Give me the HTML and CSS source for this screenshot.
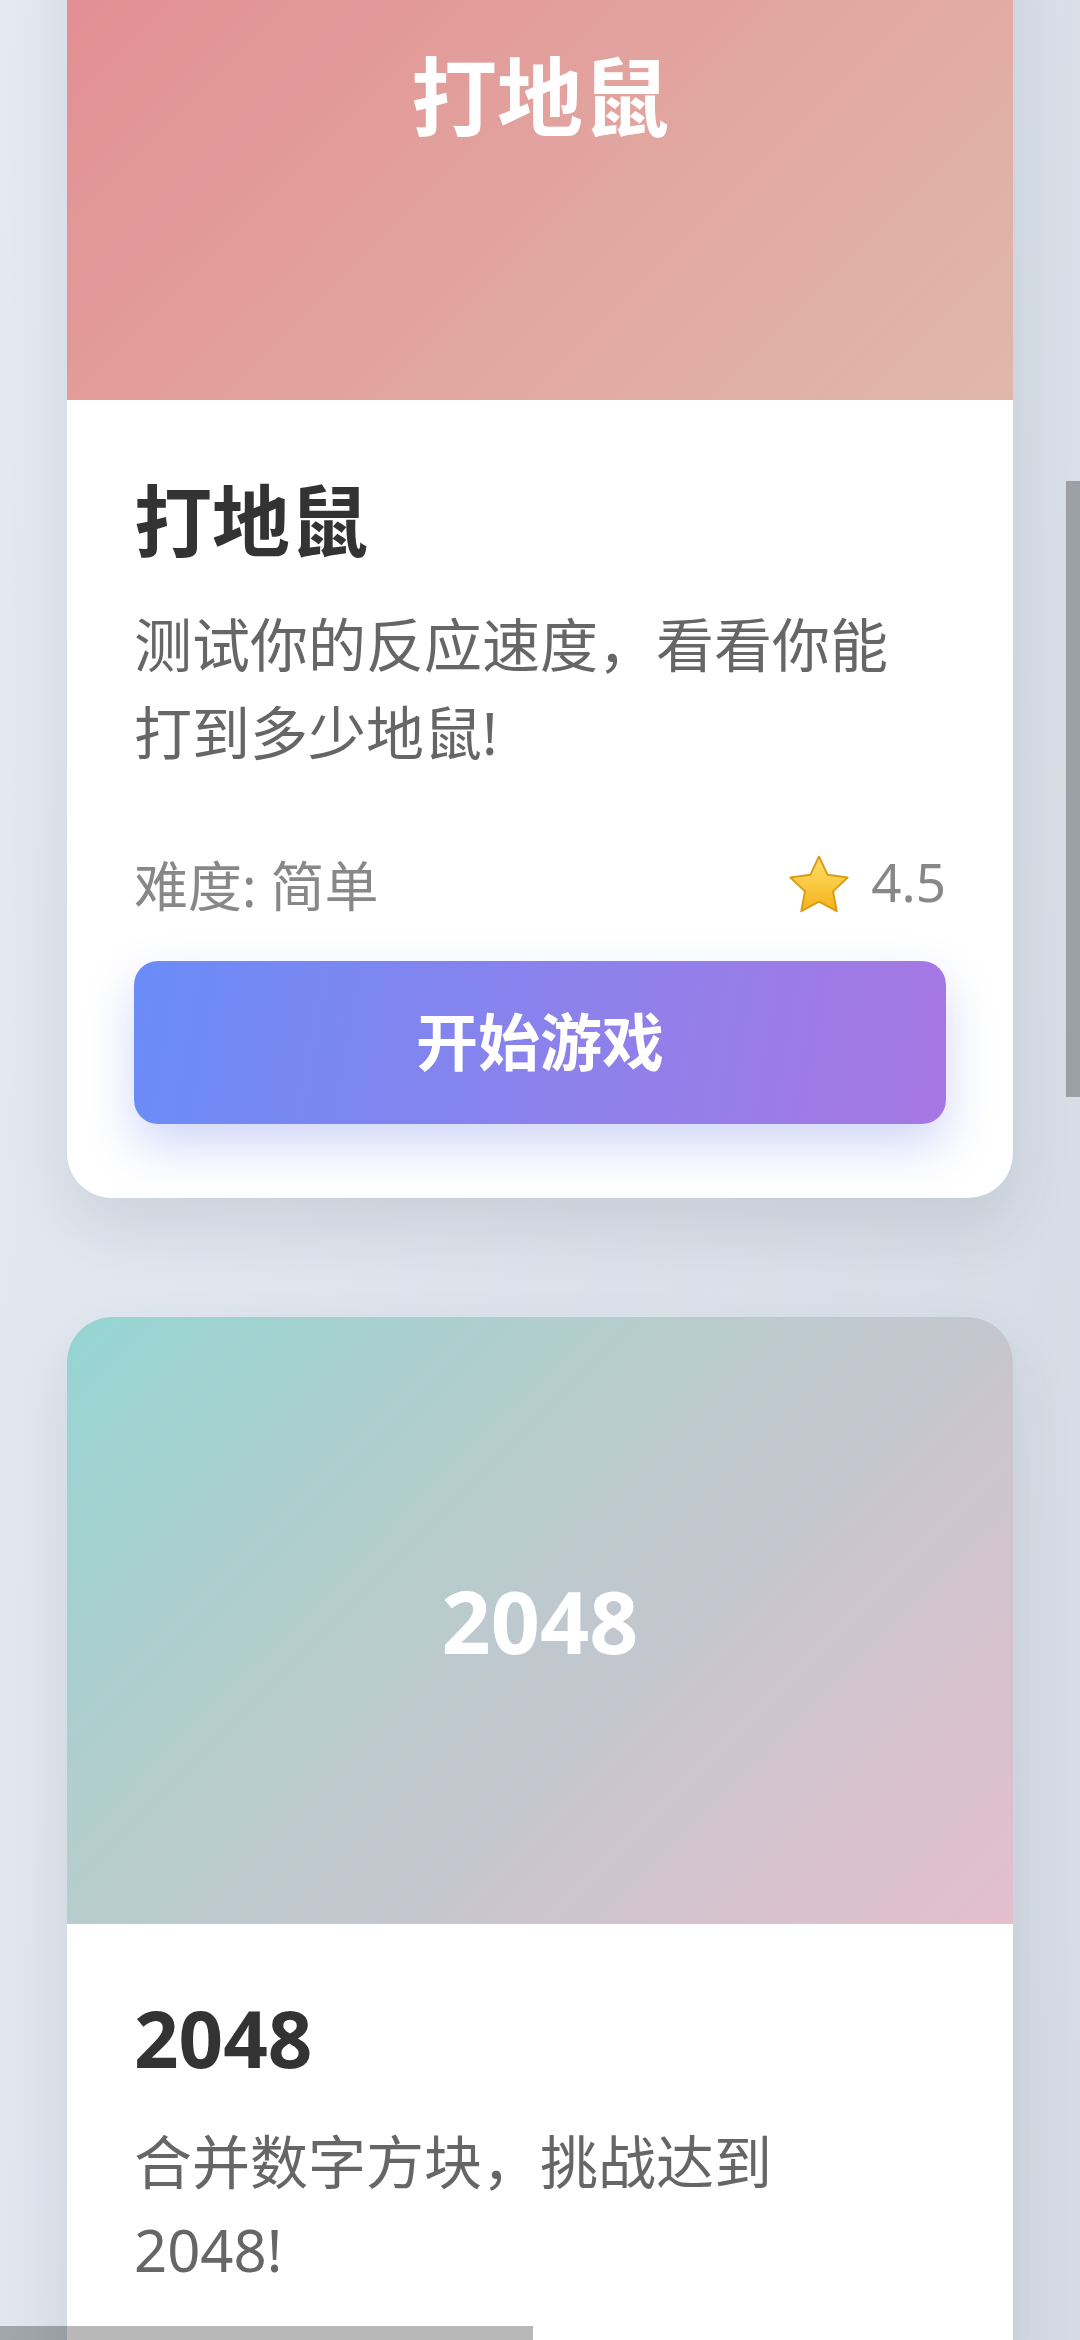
FILE: index.html
```html
<!DOCTYPE html>
<html lang="zh-CN">
<head>
<meta charset="utf-8">
<meta name="viewport" content="width=1080">
<title>游戏列表</title>
<link rel="stylesheet" href="styles.css">
</head>
<body>
<main class="game-list">
  <article class="card">
    <div class="card-cover cover-mole"><span class="cover-title">打地鼠</span></div>
    <div class="card-body">
      <h3 class="card-title">打地鼠</h3>
      <p class="card-desc">测试你的反应速度，看看你能打到多少地鼠!</p>
      <div class="card-meta">
        <span class="difficulty">难度: 简单</span>
        <span class="rating">
          <svg class="star" viewBox="0 0 24 24" aria-hidden="true">
            <defs>
              <linearGradient id="starFill" x1="0" y1="0" x2="0" y2="1">
                <stop offset="0" stop-color="#ffe16a"/>
                <stop offset="1" stop-color="#f5b21b"/>
              </linearGradient>
            </defs>
            <path d="M12 1.6l3.05 6.45 7.05.95-5.15 4.9 1.3 7L12 17.5l-6.25 3.4 1.3-7L1.9 9l7.05-.95z" fill="url(#starFill)" stroke="#dd9c16" stroke-width="0.7" stroke-linejoin="round"/>
          </svg>
          <span class="rating-value">4.5</span>
        </span>
      </div>
      <button class="play-btn" type="button">开始游戏</button>
    </div>
  </article>

  <article class="card">
    <div class="card-cover cover-2048"><span class="cover-title">2048</span></div>
    <div class="card-body">
      <h3 class="card-title">2048</h3>
      <p class="card-desc">合并数字方块，挑战达到2048!</p>
      <div class="card-meta">
        <span class="difficulty">难度: 中等</span>
        <span class="rating"><span class="rating-value">4.8</span></span>
      </div>
      <button class="play-btn" type="button">开始游戏</button>
    </div>
  </article>
</main>
<div class="scroll-thumb scroll-v"></div>
<div class="scroll-thumb scroll-h"></div>
</body>
</html>
```
FILE: styles.css
```css
html, body {
  margin: 0;
  padding: 0;
  height: 2340px;
  overflow: hidden;
}

body {
  background: linear-gradient(100deg, #e5eaf2 0%, #d4dbe4 100%);
  font-family: "Noto Sans", "Noto Sans CJK SC", sans-serif;
}

.game-list {
  display: flex;
  flex-direction: column;
  gap: 119px;
  padding: 0 67px;
  margin-top: -207px;
}

.card {
  background: #ffffff;
  border-radius: 45px;
  overflow: hidden;
  box-shadow: 0 30px 60px rgba(60, 70, 90, 0.12);
}

.card-cover {
  height: 607px;
  display: flex;
  align-items: center;
  justify-content: center;
}

.cover-mole {
  background: linear-gradient(135deg, #e3898f 0%, #e2a39e 55%, #e0b8ab 100%);
}

.cover-2048 {
  background: linear-gradient(135deg, #95d5d2 0%, #b4cdcd 35%, #c5c6cf 60%, #e4bfcc 100%);
}

.cover-title {
  color: #ffffff;
  font-size: 86px;
  font-weight: 700;
  line-height: 1;
}

.card-body {
  padding: 61px 67px 74px;
}

.card-title {
  margin: 0 0 27px;
  font-size: 78px;
  font-weight: 700;
  line-height: normal;
  color: #333333;
}

.card-desc {
  margin: 0 0 79px;
  max-width: 770px;
  font-size: 58px;
  line-height: 88px;
  color: #666666;
}

.card-meta {
  display: flex;
  justify-content: space-between;
  align-items: center;
  height: 60px;
  margin-bottom: 45px;
}

.difficulty {
  font-size: 54px;
  color: #888888;
  line-height: 60px;
}

.rating {
  display: flex;
  align-items: center;
  gap: 18px;
}

.star {
  width: 68px;
  height: 68px;
  display: block;
}

.rating-value {
  font-size: 53px;
  color: #888888;
  line-height: 60px;
  margin-bottom: 8px;
}

.play-btn {
  display: block;
  width: 100%;
  height: 163px;
  border: 0;
  border-radius: 24px;
  background: linear-gradient(100deg, #6a8cf7 0%, #8a82ec 50%, #a777e3 100%);
  box-shadow: 0 22px 48px rgba(102, 126, 234, 0.3);
  color: #ffffff;
  font-family: "Noto Sans", "Noto Sans CJK SC", sans-serif;
  font-size: 62px;
  font-weight: 700;
  line-height: 163px;
  padding: 0;
}

.scroll-thumb {
  position: fixed;
  background: rgba(0, 0, 0, 0.28);
}

.scroll-v {
  right: 0;
  top: 481px;
  width: 14px;
  height: 616px;
}

.scroll-h {
  left: 0;
  bottom: 0;
  width: 533px;
  height: 14px;
}
```
